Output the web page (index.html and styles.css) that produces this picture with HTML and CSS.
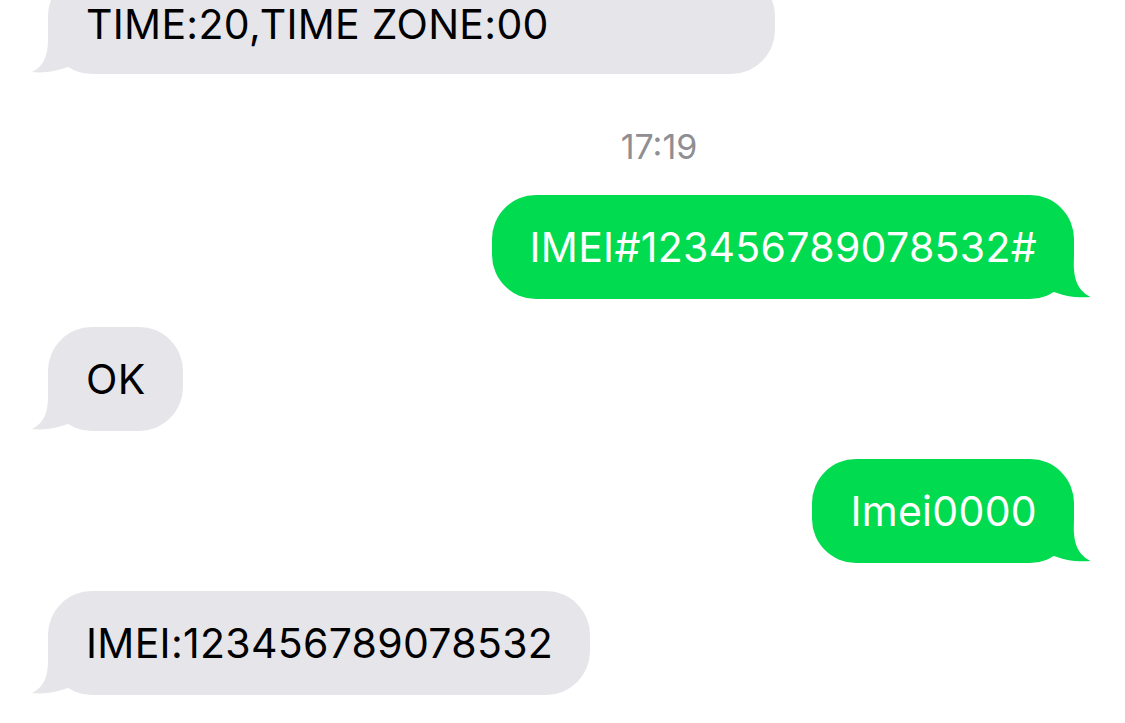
FILE: index.html
```html
<!DOCTYPE html>
<html lang="en">
<head>
    <meta charset="UTF-8">
    <meta name="viewport" content="width=device-width, initial-scale=1.0">
    <title>Messages</title>
    <link rel="stylesheet" href="styles.css">
</head>
<body>
    <div class="thread">
        <div class="bubble them first">
            TIME:20,TIME ZONE:00
            <svg class="tail" viewBox="0 0 44 48"><path d="M16,0 L16,14 C16,32 10,41 0,46 C12,47.5 26,45 38,40 L40,0 Z"/></svg>
        </div>

        <div class="stamp">17:19</div>

        <div class="bubble me">
            IMEI#123456789078532#
            <svg class="tail" viewBox="0 0 44 48"><path d="M16,0 L16,14 C16,32 10,41 0,46 C12,47.5 26,45 38,40 L40,0 Z"/></svg>
        </div>

        <div class="bubble them">
            OK
            <svg class="tail" viewBox="0 0 44 48"><path d="M16,0 L16,14 C16,32 10,41 0,46 C12,47.5 26,45 38,40 L40,0 Z"/></svg>
        </div>

        <div class="bubble me">
            Imei0000
            <svg class="tail" viewBox="0 0 44 48"><path d="M16,0 L16,14 C16,32 10,41 0,46 C12,47.5 26,45 38,40 L40,0 Z"/></svg>
        </div>

        <div class="bubble them">
            IMEI:123456789078532
            <svg class="tail" viewBox="0 0 44 48"><path d="M16,0 L16,14 C16,32 10,41 0,46 C12,47.5 26,45 38,40 L40,0 Z"/></svg>
        </div>
    </div>
</body>
</html>
```

FILE: styles.css
```css
body {
    margin: 0;
    background: #fff;
    font-family: 'Inter', 'Liberation Sans', sans-serif;
    overflow: hidden;
}

.thread {
    display: flex;
    flex-direction: column;
    align-items: flex-start;
    padding: 0 51px 0 48px;
}

.bubble {
    position: relative;
    padding: 28px 37px 28px 38px;
    border-radius: 44px;
    font-size: 41px;
    line-height: 48px;
    letter-spacing: 0.3px;
    white-space: nowrap;
    margin-bottom: 28px;
}

.bubble.first {
    margin-top: -28px;
    margin-bottom: 0;
    padding-bottom: 26px;
    padding-right: 226px;
}

.them {
    background: #e5e5ea;
    color: #000;
}

.me {
    align-self: flex-end;
    background: #00db4f;
    color: #fff;
}

.tail {
    position: absolute;
    bottom: 0;
    width: 44px;
    height: 48px;
}

.them .tail {
    left: -16px;
    fill: #e5e5ea;
}

.me .tail {
    right: -18px;
    width: 49px;
    height: 50px;
    fill: #00db4f;
    transform: scaleX(-1);
}

.stamp {
    align-self: stretch;
    text-align: center;
    color: #8e8e93;
    font-size: 34px;
    line-height: 40px;
    margin: 53px 0 28px 196px;
}
```
